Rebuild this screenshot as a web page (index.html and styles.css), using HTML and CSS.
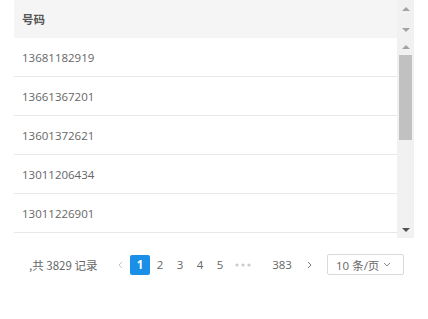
FILE: index.html
```html
<!DOCTYPE html>
<html lang="zh-CN">
<head>
  <meta charset="UTF-8" />
  <title>号码列表</title>
  <link rel="stylesheet" href="styles.css">
</head>
<body>
  <div class="grid">
    <div class="grid-head">
      <div class="head-cell">号码</div>
      <div class="gutter">
        <div class="sb-btn"><span class="arr up"></span></div>
        <div class="sb-btn"><span class="arr down"></span></div>
      </div>
    </div>
    <div class="grid-body">
      <div class="rows">
        <div class="row">13681182919</div>
        <div class="row">13661367201</div>
        <div class="row">13601372621</div>
        <div class="row">13011206434</div>
        <div class="row">13011226901</div>
        <div class="row">13011228812</div>
      </div>
      <div class="scrollbar">
        <div class="sb-btn"><span class="arr up"></span></div>
        <div class="thumb"></div>
        <div class="track"></div>
        <div class="sb-btn"><span class="arr down dark"></span></div>
      </div>
    </div>
  </div>

  <div class="pager">
    <div class="total">,共 3829 记录</div>
    <span class="pg prev"><svg width="5" height="8" viewBox="0 0 5 8"><path d="M4 1 L1 4 L4 7" fill="none" stroke="#c5c5c5" stroke-width="1"/></svg></span>
    <span class="pg active">1</span>
    <span class="pg">2</span>
    <span class="pg">3</span>
    <span class="pg">4</span>
    <span class="pg">5</span>
    <span class="pg dots"><svg width="16" height="4" viewBox="0 0 16 4"><circle cx="2" cy="2" r="1.6" fill="#ccc"/><circle cx="8" cy="2" r="1.6" fill="#ccc"/><circle cx="14" cy="2" r="1.6" fill="#ccc"/></svg></span>
    <span class="pg last">383</span>
    <span class="pg next"><svg width="5" height="8" viewBox="0 0 5 8"><path d="M1 1 L4 4 L1 7" fill="none" stroke="#777" stroke-width="1"/></svg></span>
    <div class="size">10 条/页 <svg width="8" height="5" viewBox="0 0 8 5"><path d="M1 1 L4 4 L7 1" fill="none" stroke="#888" stroke-width="1"/></svg></div>
  </div>
</body>
</html>
```

FILE: styles.css
```css
body {
  margin: 0;
  font-family: "Open Sans", "Noto Sans CJK SC", sans-serif;
  font-size: 11.5px;
  color: #666;
  background: #fff;
}
.grid {
  margin-left: 14px;
  width: 400px;
}
.grid-head {
  display: flex;
  height: 38px;
}
.head-cell {
  flex: 1;
  background: #f5f5f5;
  padding-left: 8px;
  display: flex;
  align-items: center;
  font-weight: bold;
  color: #555;
}
.gutter {
  width: 17px;
  background: #f1f1f1;
  display: flex;
  flex-direction: column;
  justify-content: space-between;
}
.sb-btn {
  height: 17px;
  display: flex;
  align-items: center;
  justify-content: center;
}
.arr {
  width: 0;
  height: 0;
  border-left: 4px solid transparent;
  border-right: 4px solid transparent;
}
.arr.up {
  border-bottom: 4px solid #a3a3a3;
}
.arr.down {
  border-top: 4px solid #a3a3a3;
}
.arr.down.dark {
  border-top-color: #505050;
}
.grid-body {
  display: flex;
  height: 200px;
}
.rows {
  flex: 1;
  overflow: hidden;
}
.row {
  height: 38px;
  border-bottom: 1px solid #e8e8e8;
  padding-left: 8px;
  display: flex;
  align-items: center;
}
.scrollbar {
  width: 17px;
  background: #f1f1f1;
  display: flex;
  flex-direction: column;
}
.thumb {
  height: 85px;
  margin: 0 2px;
  background: #c1c1c1;
}
.track {
  flex: 1;
}
.pager {
  display: flex;
  align-items: center;
  margin-top: 16px;
  padding-left: 29px;
}
.total {
  width: 81px;
  flex-shrink: 0;
  white-space: nowrap;
  line-height: 20px;
  font-family: "Noto Sans CJK SC", sans-serif;
}
.pg {
  width: 20px;
  height: 20px;
  line-height: 20px;
  text-align: center;
  border-radius: 2px;
  display: flex;
  align-items: center;
  justify-content: center;
}
.pg.next {
  margin-left: 1px;
}
.pg.active {
  background: #1a8fe8;
  color: #fff;
  font-weight: bold;
}
.pg.dots {
  width: 26px;
}
.pg.last {
  width: 32px;
  margin-left: 10px;
}
.size {
  margin-left: 8px;
  width: 67px;
  height: 19px;
  border: 1px solid #d9d9d9;
  border-radius: 2px;
  display: flex;
  align-items: center;
  padding-left: 8px;
  gap: 4px;
  white-space: nowrap;
}
```
